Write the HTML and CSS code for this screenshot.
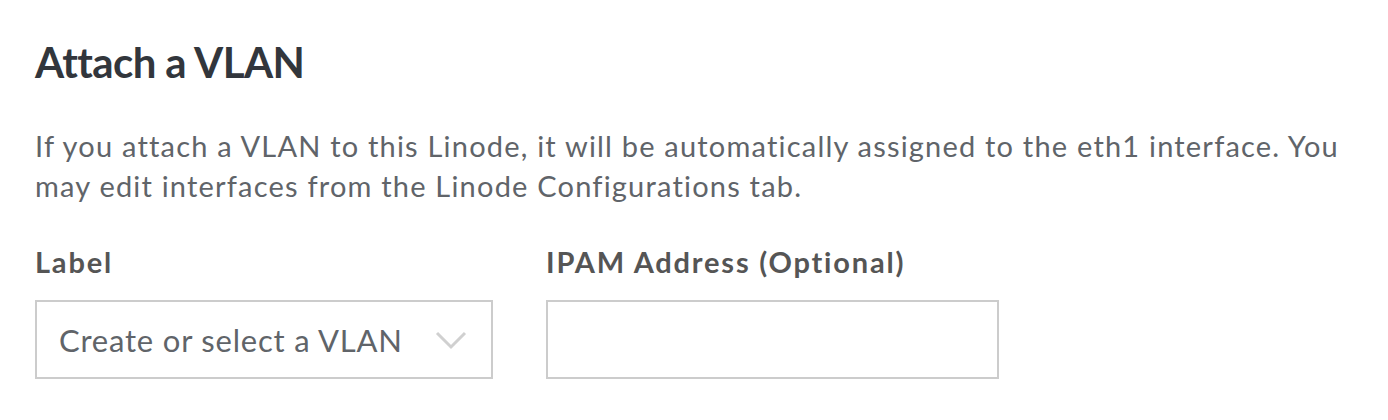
FILE: index.html
```html
<!DOCTYPE html>
<html>
<head>
<meta charset="utf-8">
<link rel="stylesheet" href="styles.css">
</head>
<body>
<section class="panel">
  <h2 class="title">Attach a VLAN</h2>
  <p class="desc">If you attach a VLAN to this Linode, it will be automatically assigned to the eth1 interface. You may edit interfaces from the Linode Configurations tab.</p>
  <div class="fields">
    <div class="field">
      <label class="label">Label</label>
      <div class="select">
        <span class="placeholder">Create or select a VLAN</span>
        <svg class="chev" width="32" height="20" viewBox="0 0 32 20"><path d="M2 3 L16 17 L30 3" fill="none" stroke="#d0d0d0" stroke-width="3"/></svg>
      </div>
    </div>
    <div class="field">
      <label class="label">IPAM Address (Optional)</label>
      <div class="input"></div>
    </div>
  </div>
</section>
</body>
</html>
```
FILE: styles.css
```css
html, body {
  margin: 0;
  padding: 0;
  background: #fff;
}
.panel {
  padding: 36px 35px 0 35px;
  font-family: Lato, "Open Sans", sans-serif;
}
.title {
  margin: 0;
  font-size: 42px;
  font-weight: 700;
  color: #32363c;
  line-height: 52px;
  letter-spacing: -0.6px;
}
.desc {
  margin: 38px 0 0 0;
  font-size: 29px;
  line-height: 40px;
  color: #606469;
  letter-spacing: 1.2px;
  max-width: 1325px;
}
.fields {
  display: flex;
  gap: 53px;
  margin-top: 38px;
}
.field {
  display: flex;
  flex-direction: column;
}
.label {
  font-size: 29px;
  font-weight: 700;
  color: #555555;
  line-height: 36px;
  letter-spacing: 1.8px;
  margin-bottom: 20px;
}
.select, .input {
  box-sizing: border-box;
  height: 79px;
  border: 2px solid #cccccc;
  background: #fff;
}
.select {
  width: 458px;
  display: flex;
  align-items: center;
  justify-content: space-between;
  padding: 0 24px 0 22px;
}
.input {
  width: 453px;
}
.placeholder {
  font-size: 31px;
  letter-spacing: 0.8px;
  color: #606469;
}
.chev {
  display: block;
}
```
